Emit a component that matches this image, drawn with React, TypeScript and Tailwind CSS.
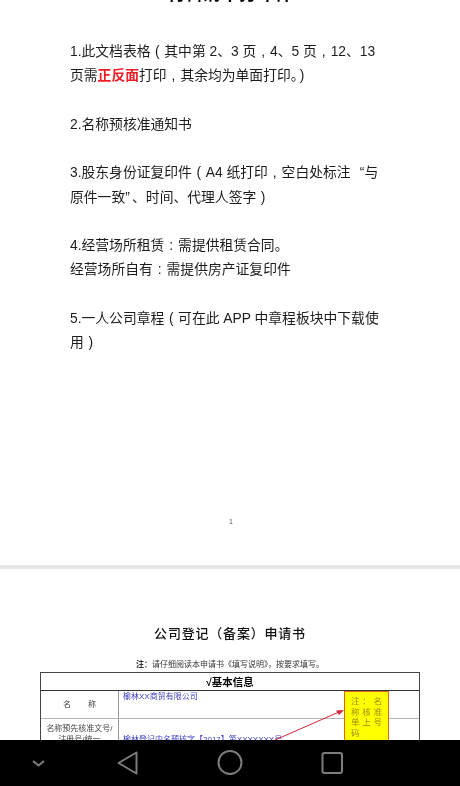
const Mark = ({ c }: { c: string }) => <span className="inline-block w-[1em] text-center">{c}</span>

const Line = ({ children }: { children: React.ReactNode }) => <div className="h-[24.4px] whitespace-nowrap">{children}</div>

const Gap = () => <div className="h-[24px]" />

const App = () => {
  return (
    <div className="flex flex-col h-[786px] w-[460px] overflow-hidden bg-white font-['Liberation_Sans','Noto_Sans_CJK_SC',sans-serif]">
      <div className="flex-1 overflow-hidden blur-[0.35px]">
        {/* first page */}
        <div className="relative h-[565px] bg-white">
          <h1 className="absolute top-[-16px] left-0 w-full text-center text-[18px] leading-[20px] font-bold text-black">材料清单打印件</h1>
          <div className="pt-[40px] pl-[70px] text-[13.8px] leading-[24.4px] text-[#1c1c1c]">
            <Line>1.此文档表格<Mark c="(" />其中第 2、3 页<Mark c="," />4、5 页<Mark c="," />12、13</Line>
            <Line>页需<span className="font-bold text-[#ee1c25]">正反面</span>打印<Mark c="," />其余均为单面打印。<span className="ml-[2px]">)</span></Line>
            <Gap />
            <Line>2.名称预核准通知书</Line>
            <Gap />
            <Line>3.股东身份证复印件<Mark c="(" />A4 纸打印<Mark c="," />空白处标注<span className="inline-block w-[1em] text-right">“</span>与</Line>
            <Line>原件一致<span className="inline-block w-[0.5em]">”</span>、时间、代理人签字<Mark c=")" /></Line>
            <Gap />
            <Line>4.经营场所租赁<Mark c=":" />需提供租赁合同。</Line>
            <Line>经营场所自有<Mark c=":" />需提供房产证复印件</Line>
            <Gap />
            <Line>5.一人公司章程<Mark c="(" />可在此 APP 中章程板块中下载使</Line>
            <Line>用<Mark c=")" /></Line>
          </div>
          <span className="absolute top-[518px] left-[229px] text-[7px] leading-[8px] text-[#555]">1</span>
        </div>

        {/* page gap */}
        <div className="h-[4px] bg-[#e6e6e4]" />

        {/* second page */}
        <div className="bg-white pt-[56px]">
          <h2 className="text-center text-[13px] leading-[18px] tracking-[0.8px] font-medium text-[#111]">公司登记（备案）申请书</h2>
          <p className="mt-[17px] text-center text-[8px] leading-[10px] font-['Liberation_Serif','Noto_Sans_CJK_SC',serif] text-[#333]">
            <b>注：</b>请仔细阅读本申请书《填写说明》，按要求填写。
          </p>
          <div className="relative mt-[2px] ml-[40px] w-[380px] h-[100px] border-x border-t border-[#444]">
            <div className="h-[18px] border-b border-[#333] text-center text-[10.500px] leading-[18px] font-bold text-black">√基本信息</div>
            <div className="flex h-[28px] border-b border-[#b5b5b5]">
              <div className="flex w-[78px] items-center justify-center gap-[17px] border-r border-[#999] text-[8px] text-[#444]">
                <span>名</span>
                <span>称</span>
              </div>
              <div className="pl-[4px] pt-[1px] text-[8px] leading-[10px] text-[#3a3fc0]">榆林XX商贸有限公司</div>
            </div>
            <div className="flex h-[50px]">
              <div className="w-[78px] border-r border-[#999] pt-[4px] text-center text-[8px] leading-[11px] text-[#444]">
                名称预先核准文号/<br />注册号/统一
              </div>
              <div className="pl-[4px] pt-[16px] text-[8px] leading-[10px] text-[#3a3fc0]">榆林登记内名预核字【2017】第XXXXXXX号</div>
            </div>
            {/* yellow note */}
            <div className="absolute left-[303px] top-[18px] h-[60px] w-[45px] border border-[#e0661c] bg-[#ffff00] px-[6px] pt-[4px] text-[8.500px] leading-[10.500px] text-[#9a8a10]">
              <div className="flex justify-between"><span>注</span><span>：</span><span>名</span></div>
              <div className="flex justify-between"><span>称</span><span>核</span><span>准</span></div>
              <div className="flex justify-between"><span>单</span><span>上</span><span>号</span></div>
              <div>码</div>
            </div>
            {/* arrow */}
            <svg className="absolute left-[230px] top-[30px]" width="75" height="40" viewBox="0 0 75 40" fill="none">
              <path d="M4 37 L68 9" stroke="#d3273a" strokeWidth="1" />
              <path d="M73 7 L65 7.5 L68 12 Z" fill="#d3273a" />
            </svg>
          </div>
        </div>
      </div>

      {/* android nav bar */}
      <div className="relative z-10 flex h-[46px] shrink-0 bg-black">
        <svg className="absolute inset-0" width="460" height="46" viewBox="0 0 460 46" fill="none" stroke="#7d7d7d" strokeWidth="2">
          <path d="M33 21 L38.500 25.500 L44 21" />
          <path d="M136.500 12.500 L136.500 33.500 L118.500 23 Z" strokeLinejoin="round" />
          <circle cx="230" cy="22.500" r="11.500" />
          <rect x="322.500" y="13" width="19.500" height="20" rx="2" />
        </svg>
      </div>
    </div>
  )
}

export default App
